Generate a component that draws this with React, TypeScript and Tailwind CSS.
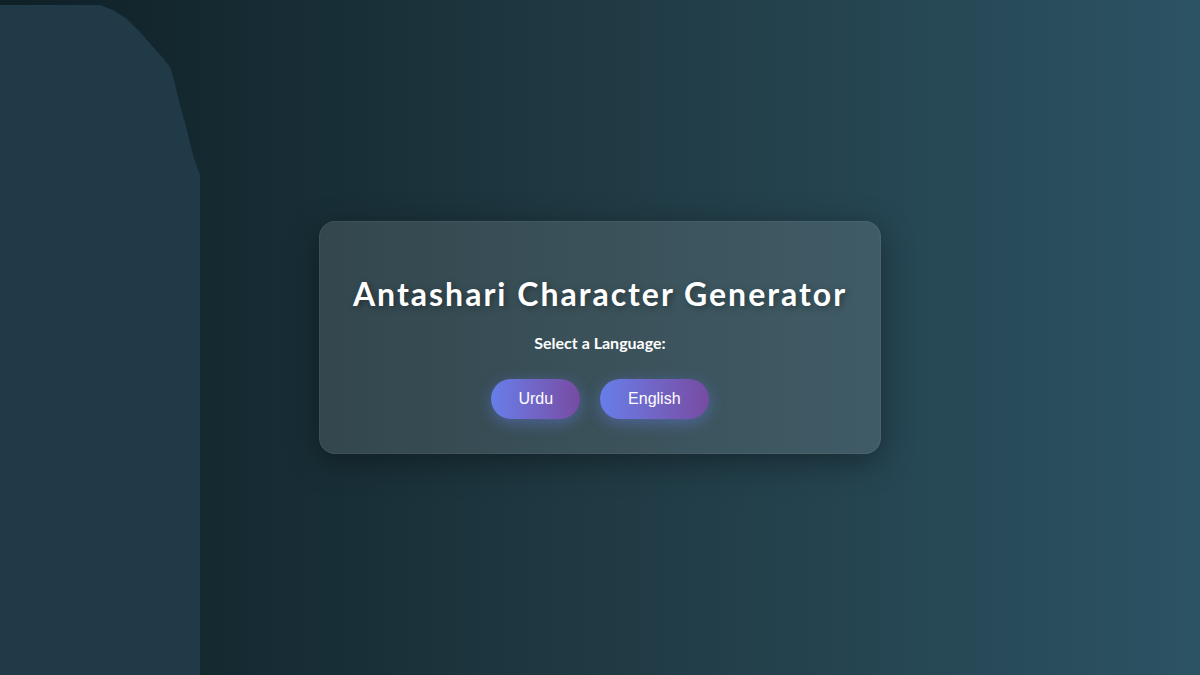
import React, { useState } from 'react';

const languages = ['Urdu', 'English'];

// soft panel on the left edge of the page
const SideShape: React.FC = () => (
  <svg className="absolute left-0 top-0" width="200" height="675" viewBox="0 0 200 675">
    <path
      d="M0 5 L100 5 L113 10 L127 19 L140 32 L153 47 L163 58 L170 67 L173 76 L180 105 L187 130 L193 155 L197 167 L200 175 L200 675 L0 675 Z"
      fill="#213a47"
    />
  </svg>
);

export default function App() {
  const [language, setLanguage] = useState<string | null>(null);

  return (
    <div className="relative min-h-screen h-[675px] w-full overflow-hidden bg-gradient-to-r from-[#0f2027] via-[#203a43] to-[#2c5364] flex items-center justify-center">
      <SideShape />

      <div className="relative w-[562px] h-[233px] rounded-2xl bg-white/[0.12] border border-white/5 shadow-[0_8px_32px_rgba(0,0,0,0.37)] flex flex-col items-center pt-[52px]">
        <h1 className="font-['Lato',sans-serif] font-bold text-[32px] leading-[40px] tracking-[2px] text-white [text-shadow:2px_2px_6px_rgba(0,0,0,0.35)]">
          Antashari Character Generator
        </h1>
        <p className="mt-[19px] font-['Lato',sans-serif] font-bold text-[16px] leading-5 text-white">
          Select a Language:
        </p>
        <div className="mt-[26px] flex gap-[20px]">
          {languages.map(l => (
            <button
              key={l}
              onClick={() => setLanguage(l)}
              className={`h-10 px-[27px] rounded-full bg-gradient-to-r from-[#667eea] to-[#764ba2] text-white font-['Liberation_Sans',Arial,sans-serif] text-base shadow-[0_4px_15px_rgba(102,126,234,0.45)] ${language === l ? 'ring-2 ring-white/40' : ''} ${l === 'English' ? 'px-[28px]' : ''}`}
            >
              {l}
            </button>
          ))}
        </div>
      </div>
    </div>
  );
}
